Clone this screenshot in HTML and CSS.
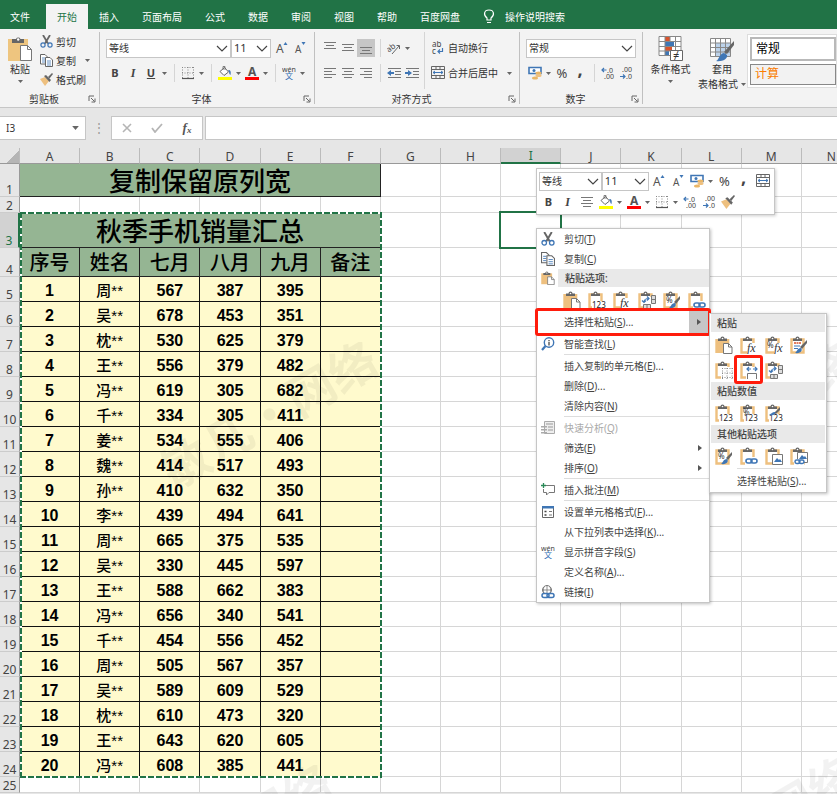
FILE: index.html
```
<!DOCTYPE html>
<html lang="zh-CN">
<head>
  <meta charset="UTF-8" />
  <meta name="viewport" content="width=device-width, initial-scale=1">
  <title>复制保留原列宽</title>
  <link rel="stylesheet" href="styles.css">
</head>
<body>
  <svg class="sprite" aria-hidden="true">
    <symbol id="i-chev" viewBox="0 0 12 7"><path d="M1 1l5 5 5-5" fill="none" stroke="#444" stroke-width="1.2"/></symbol>
    <symbol id="i-caret" viewBox="0 0 5 3"><path d="M0 0h5L2.5 3z" fill="#666"/></symbol>
    <symbol id="i-launch" viewBox="0 0 8 8"><path d="M1 6V1h5M3 3l3.500 3.500M7 3.500V7H3.500" fill="none" stroke="#666"/></symbol>
    <symbol id="i-paste-big" viewBox="0 0 24 26">
      <path d="M0 3h20v22H0z" fill="#eec57f"/><path d="M4 7V3h4a2.500 2.500 0 0 1 4.500 0H16v4z" fill="#666"/><circle cx="10.200" cy="3.500" r="1.200" fill="#fff"/>
      <path d="M12.500 9.500h7l4 4v11h-11z" fill="#fff" stroke="#777"/><path d="M19.500 9.500v4h4" fill="none" stroke="#777"/>
    </symbol>
    <symbol id="i-cut" viewBox="0 0 13 13">
      <path d="M3 0l5 8.500M10 0L5 8.500" stroke="#666" stroke-width="1.800" fill="none"/>
      <circle cx="3" cy="10" r="2.100" fill="none" stroke="#3f76b5" stroke-width="1.200"/><circle cx="10" cy="10" r="2.100" fill="none" stroke="#3f76b5" stroke-width="1.200"/>
    </symbol>
    <symbol id="i-copy" viewBox="0 0 13 13">
      <path d="M.5.5H5L7.500 3v7h-7z" fill="#fff" stroke="#666"/><path d="M2 4h3M2 6h3M2 8h3" stroke="#3f76b5" stroke-width=".8"/>
      <path d="M5.500 3.500H10L12.500 6v6.500h-7z" fill="#fff" stroke="#666"/><path d="M7 7h4M7 9h4M7 11h4" stroke="#3f76b5" stroke-width=".8"/>
    </symbol>
    <symbol id="i-brush" viewBox="0 0 13 13">
      <path d="M0 6l5-2 4 4-4 5z" fill="#eec07f"/><path d="M4 3l2-1 5 5-1.500 2z" fill="#666"/><path d="M8 4l4-4 1 1-3.500 4.500z" fill="#666"/>
    </symbol>
    <symbol id="i-grow" viewBox="0 0 14 14"><text x="1" y="12" class="g-a">A</text><path d="M8.500 4h4L10.500 1z" fill="#3f76b5"/></symbol>
    <symbol id="i-shrink" viewBox="0 0 14 14"><text x="2" y="12" class="g-a small">A</text><path d="M8.500 1h4L10.500 4z" fill="#3f76b5"/></symbol>
    <symbol id="i-border" viewBox="0 0 14 14"><path d="M1.500 1v11M7 1v11M12.500 1v11M1 1.500h12M1 7h12" stroke="#888" stroke-dasharray="1 1.500" fill="none"/><path d="M1 12.500h12" stroke="#555" stroke-width="1.200"/></symbol>
    <symbol id="i-fill" viewBox="0 0 14 14">
      <path d="M2 5.500L6.500 1.500 10.500 6 6 9.500z" fill="#fff" stroke="#666"/><path d="M5 4V.5h2V4" fill="none" stroke="#666" stroke-width=".8"/><path d="M10 4c3 0 3 2 2.500 5-1-.5-1.500-2-1.500-3.500z" fill="#3f76b5"/>
      <path d="M0 11h14v3H0z" fill="#ff0"/>
    </symbol>
    <symbol id="i-color" viewBox="0 0 14 14"><text x="3" y="10" class="g-a bold">A</text><path d="M0 11h14v3H0z" fill="#f00"/></symbol>
    <symbol id="i-wen" viewBox="0 0 14 14"><text x="0" y="6" class="g-wen">wén</text><text x="3" y="13" class="g-zh">文</text></symbol>
    <symbol id="i-top" viewBox="0 0 14 14"><path d="M1 1.500h12M3 4.500h8M1 7.500h12" stroke="#777"/></symbol>
    <symbol id="i-mid" viewBox="0 0 14 14"><path d="M1 3.500h12M3 6.500h8M1 9.500h12" stroke="#777"/></symbol>
    <symbol id="i-bot" viewBox="0 0 14 14"><path d="M1 6.500h12M3 9.500h8M1 12.500h12" stroke="#777"/></symbol>
    <symbol id="i-left" viewBox="0 0 14 14"><path d="M1 2.500h12M1 5.500h8M1 8.500h12M1 11.500h8" stroke="#777"/></symbol>
    <symbol id="i-center" viewBox="0 0 14 14"><path d="M1 2.500h12M3 5.500h8M1 8.500h12M3 11.500h8" stroke="#777"/></symbol>
    <symbol id="i-right" viewBox="0 0 14 14"><path d="M1 2.500h12M5 5.500h8M1 8.500h12M5 11.500h8" stroke="#777"/></symbol>
    <symbol id="i-orient" viewBox="0 0 14 14"><text x="0" y="9" class="g-ab" transform="rotate(-38 5 8)">ab</text><path d="M5 13l7-8M9.500 4.500H12.500V8" fill="none" stroke="#666"/></symbol>
    <symbol id="i-outdent" viewBox="0 0 14 14"><path d="M1 2.500h13M8 5.500h6M8 8.500h6M1 11.500h13" stroke="#777"/><path d="M0 7l4-3v2h3v2H4v2z" fill="#3f76b5"/></symbol>
    <symbol id="i-indent" viewBox="0 0 14 14"><path d="M1 2.500h13M8 5.500h6M8 8.500h6M1 11.500h13" stroke="#777"/><path d="M7 7L3 4v2H0v2h3v2z" fill="#3f76b5"/></symbol>
    <symbol id="i-wrap" viewBox="0 0 14 14"><text x="1" y="6" class="g-ab">ab</text><text x="1" y="13" class="g-ab">c</text><path d="M11.500 7v3.500H7M9 8.500l-2 2 2 2" fill="none" stroke="#3f76b5" stroke-width="1.200"/></symbol>
    <symbol id="i-merge" viewBox="0 0 14 14"><path d="M.5.500h13v12H.5zM.5 3.500h13M.5 9.500h13M5 .5v3M9 .5v3M5 9.500v3M9 9.500v3" fill="none" stroke="#666"/><path d="M2 6.500h10M4 5L2 6.500 4 8M10 5l2 1.500L10 8" fill="none" stroke="#3f76b5"/></symbol>
    <symbol id="i-money" viewBox="0 0 14 14"><path d="M1 1.500h12v6H1z" fill="#fff" stroke="#3f76b5" stroke-width="1.600"/><circle cx="6" cy="4.500" r="1.500" fill="#3f76b5"/><ellipse cx="10.500" cy="7" rx="3" ry="1.500" fill="#eab667"/><ellipse cx="10.500" cy="9.500" rx="3" ry="1.500" fill="#eec07f"/><ellipse cx="7" cy="12" rx="3" ry="1.600" fill="#eab667"/></symbol>
    <symbol id="i-dec" viewBox="0 0 14 14"><text x="6" y="7" class="g-dec">.0</text><text x="3" y="13" class="g-dec">.00</text><path d="M5.500 4H1M3 2L1 4l2 2" fill="none" stroke="#3f76b5" stroke-width="1.200"/></symbol>
    <symbol id="i-inc" viewBox="0 0 14 14"><text x="3" y="6" class="g-dec">.00</text><text x="7" y="13" class="g-dec">.0</text><path d="M1 10.500h5M4 8.500l2 2-2 2" fill="none" stroke="#3f76b5" stroke-width="1.200"/></symbol>
    <symbol id="i-cond" viewBox="0 0 26 26">
      <path d="M1 .5h22v19H1z" fill="#fff"/><path d="M7 .5h5v5H7zM7 10h7v5H7z" fill="#d9532c"/><path d="M7 5.500h9V10H7zM7 15h4v5H7z" fill="#3f76b5"/>
      <path d="M1 .5h22v19H1zM1 5.500h22M1 10.500h22M1 15h22M7 .5v19M12 .5v5M17.500 .5v19" fill="none" stroke="#888"/><path d="M12.500 14.500h12v10h-12z" fill="#fff" stroke="#666"/><text x="15" y="23" class="g-ne">≠</text>
    </symbol>
    <symbol id="i-table" viewBox="0 0 26 26">
      <path d="M1.500 2.500h20v18h-20z" fill="#fff"/><path d="M6.500 7h15v13.500h-15z" fill="#bcd2ea"/><path d="M1.500 2.500h20v18h-20zM1.500 7h20M1.500 11.500h20M1.500 16h20M6.500 2.500v18M11.500 2.500v18M16.500 2.500v18" fill="none" stroke="#888"/>
      <path d="M25 5v4l-7 9-3-2z" fill="#666"/><path d="M7 25c3-1 3-7 8-8l3 2c1 4-5 7-11 6z" fill="#3f76b5"/>
    </symbol>
    <symbol id="i-bulb" viewBox="0 0 12 15"><path d="M4 11V9C0 6 1 1 6 1s6 5 2 8v2zM4 13.500h4" fill="none" stroke="#fff" stroke-width="1.200"/></symbol>
    <symbol id="i-info" viewBox="0 0 14 14"><circle cx="8" cy="5.500" r="4.700" fill="#fff" stroke="#3f76b5" stroke-width="1.400"/><path d="M4.500 9L1 13" stroke="#3f76b5" stroke-width="2.200"/><path d="M8 3v1.200M8 5v3.500" stroke="#555" stroke-width="1.400"/></symbol>
    <symbol id="i-quick" viewBox="0 0 14 14"><path d="M3.500.5h10v12h-10z" fill="#eee" stroke="#aaa"/><path d="M5 3h7M7 6h5M7 9h5" stroke="#999"/><path d="M0 5h6v1.500H0zM0 8h6v1.500H0zM0 11h6v1.500H0z" fill="#aaa"/></symbol>
    <symbol id="i-note" viewBox="0 0 14 14"><path d="M5 2.500h8.500v7H8L5.500 12V9.500H2.500V6" fill="none" stroke="#777"/><path d="M2.500 0v5M0 2.500h5" stroke="#2a8a57" stroke-width="1.300"/></symbol>
    <symbol id="i-cellfmt" viewBox="0 0 14 14"><path d="M1.500 1.500h11v11h-11z" fill="#fff" stroke="#666"/><path d="M1 1h12v2.500H1z" fill="#3f76b5"/><path d="M3.500 6.500h2M3.500 10h2" stroke="#444" stroke-width="1.500"/><path d="M8 6.500h3M8 10h3" stroke="#777"/></symbol>
    <symbol id="i-link" viewBox="0 0 14 14"><circle cx="6" cy="5" r="4.500" fill="#fff" stroke="#777"/><path d="M1.500 5h9M6 .5v9M3 2c-1 2-1 4 0 6M9 2c1 2 1 4 0 6" fill="none" stroke="#777" stroke-width=".8"/><rect x="1" y="8.500" width="7" height="4" rx="2" fill="#fff" stroke="#3f76b5" stroke-width="1.500"/><rect x="6" y="8.500" width="7" height="4" rx="2" fill="none" stroke="#3f76b5" stroke-width="1.500"/></symbol>

    <!-- clipboard family for the paste options -->
    <symbol id="c-base" viewBox="0 0 18 18"><path d="M1.500 3.500h12v13h-12z" fill="#fff" stroke="#eec07f" stroke-width="2.400"/><path d="M3 5V2.500h2.500a2 2 0 0 1 4 0H12V5z" fill="#666"/><circle cx="7.500" cy="2.500" r=".8" fill="#fff"/></symbol>
    <symbol id="p-all" viewBox="0 0 18 18"><path d="M.3 3h14v14H.3z" fill="#eec07f"/><path d="M3 5V2.500h2.500a2 2 0 0 1 4 0H12V5z" fill="#666"/><circle cx="7.500" cy="2.500" r=".8" fill="#fff"/><path d="M8.500 7.500h5l3.500 3.500v6.500H8.500z" fill="#fff" stroke="#777"/><path d="M13.500 7.500V11H17" fill="none" stroke="#777"/></symbol>
    <symbol id="p-123" viewBox="0 0 18 18"><use href="#c-base"/><path d="M4 10h14v8H4z" fill="#fff"/><text x="4" y="17" class="g-123">123</text></symbol>
    <symbol id="p-fx" viewBox="0 0 18 18"><use href="#c-base"/><path d="M7 7h11v11H7z" fill="#fff"/><text x="7" y="16" class="g-fx">fx</text></symbol>
    <symbol id="p-pfx" viewBox="0 0 18 18"><use href="#c-base"/><path d="M9 7h9v11H9z" fill="#fff"/><text x="2" y="12" class="g-pct">%</text><text x="9" y="16" class="g-fx">fx</text></symbol>
    <symbol id="p-src" viewBox="0 0 18 18"><use href="#c-base"/><path d="M4 7h7" stroke="#d9532c" stroke-width="1.500" stroke-dasharray="2 .5"/><path d="M4 10h6M4 12.500h4" stroke="#3f76b5"/><path d="M17 4v3l-5 6-2-2z" fill="#666"/><path d="M5 17c2-1 2-5 6-5 2 2 0 6-6 5z" fill="#3f76b5"/></symbol>
    <symbol id="p-nob" viewBox="0 0 18 18"><use href="#c-base"/><path d="M6 6h12v12H6z" fill="#fff"/><path d="M7 7.500h11M7 12h11M7 16.500h11M7.500 7v11M12 7v11M17 7v11" stroke="#888" stroke-dasharray="1 1.500"/></symbol>
    <symbol id="p-width" viewBox="0 0 18 18"><use href="#c-base"/><path d="M6 6h12v12H6z" fill="#fff"/><path d="M7 8h4M13 8h4M9 6L7 8l2 2M15 6l2 2-2 2" fill="none" stroke="#3f76b5" stroke-width="1.200"/><path d="M7.500 18v-5.500h9V18" fill="none" stroke="#777"/></symbol>
    <symbol id="p-trans" viewBox="0 0 18 18"><use href="#c-base"/><path d="M5 6h13v12H5z" fill="#fff"/><path d="M13.500 4.500h4v8h-4zM13.500 8.500h4M5.500 13.500h7v4h-7zM9 13.500v4" fill="#ddd" stroke="#777"/><path d="M6 11.500c0-3 1-4 5-4M9 5.500l2 2-2 2M4 9.500l2 2 2-2" fill="none" stroke="#3f76b5" stroke-width="1.200"/></symbol>
    <symbol id="p-fmt" viewBox="0 0 18 18"><use href="#c-base"/><text x="3" y="12" class="g-pct">%</text><path d="M17 5v3l-4 5-2-2z" fill="#666"/><path d="M6 17c2-1 2-5 6-5 2 2 0 6-6 5z" fill="#3f76b5"/></symbol>
    <symbol id="p-p123" viewBox="0 0 18 18"><use href="#p-123"/><text x="3" y="11" class="g-pct">%</text></symbol>
    <symbol id="p-b123" viewBox="0 0 18 18"><use href="#p-123"/><path d="M15 3v3l-4 4-2-1z" fill="#666"/><path d="M4 11c2-1 3-3 6-3 1 2-1 4-6 3z" fill="#3f76b5"/></symbol>
    <symbol id="p-link" viewBox="0 0 18 18"><use href="#c-base"/><path d="M5 10h13v8H5z" fill="#fff"/><rect x="6" y="12" width="6" height="4" rx="2" fill="none" stroke="#3f76b5" stroke-width="1.600"/><rect x="11" y="12" width="6" height="4" rx="2" fill="none" stroke="#3f76b5" stroke-width="1.600"/></symbol>
    <symbol id="p-pic" viewBox="0 0 18 18"><use href="#c-base"/><path d="M7.500 7.500h10v10h-10z" fill="#fff" stroke="#777"/><path d="M9 15l3-4 2 2 1-1 2 3z" fill="#3f76b5"/></symbol>
    <symbol id="p-lpic" viewBox="0 0 18 18"><use href="#c-base"/><path d="M7.500 5.500h10v10h-10z" fill="#fff" stroke="#777"/><path d="M9 12l3-4 2 2 1-1 2 3z" fill="#3f76b5"/><path d="M4 12h10v6H4z" fill="#fff"/><rect x="5" y="13" width="5" height="3.500" rx="1.700" fill="none" stroke="#3f76b5" stroke-width="1.500"/><rect x="9" y="13" width="5" height="3.500" rx="1.700" fill="none" stroke="#3f76b5" stroke-width="1.500"/></symbol>
  </svg>

  <nav class="tabs">
    <button class="tab file">文件</button>
    <button class="tab active">开始</button>
    <button class="tab">插入</button>
    <button class="tab">页面布局</button>
    <button class="tab">公式</button>
    <button class="tab">数据</button>
    <button class="tab">审阅</button>
    <button class="tab">视图</button>
    <button class="tab">帮助</button>
    <button class="tab">百度网盘</button>
    <button class="tab tell"><svg width="12" height="15"><use href="#i-bulb"/></svg>操作说明搜索</button>
  </nav>

  <div class="ribbon">
    <section class="group clip">
      <div class="group-body">
        <button class="big"><svg width="24" height="26"><use href="#i-paste-big"/></svg><span>粘贴</span><svg width="5" height="3"><use href="#i-caret"/></svg></button>
        <div class="stack">
          <button class="txt"><svg width="13" height="13"><use href="#i-cut"/></svg>剪切</button>
          <button class="txt"><svg width="13" height="13"><use href="#i-copy"/></svg>复制<svg class="more" width="5" height="3"><use href="#i-caret"/></svg></button>
          <button class="txt"><svg width="13" height="13"><use href="#i-brush"/></svg>格式刷</button>
        </div>
      </div>
      <div class="group-name"><span>剪贴板</span><svg width="8" height="8"><use href="#i-launch"/></svg></div>
    </section>

    <section class="group font">
      <div class="group-body rows">
        <div class="row">
          <span class="combo family"><select aria-label="字体"><option>等线</option></select><svg width="12" height="7"><use href="#i-chev"/></svg></span>
          <span class="combo size"><select aria-label="字号"><option>11</option></select><svg width="12" height="7"><use href="#i-chev"/></svg></span>
          <button class="ib"><svg width="14" height="14"><use href="#i-grow"/></svg></button>
          <button class="ib"><svg width="14" height="14"><use href="#i-shrink"/></svg></button>
        </div>
        <div class="row">
          <button class="ib"><b>B</b></button>
          <button class="ib"><i>I</i></button>
          <button class="ib"><u>U</u></button>
          <button class="cb"><svg width="5" height="3"><use href="#i-caret"/></svg></button>
          <span class="sep"></span>
          <button class="ib"><svg width="14" height="14"><use href="#i-border"/></svg></button>
          <button class="cb"><svg width="5" height="3"><use href="#i-caret"/></svg></button>
          <span class="sep"></span>
          <button class="ib"><svg width="14" height="14"><use href="#i-fill"/></svg></button>
          <button class="cb"><svg width="5" height="3"><use href="#i-caret"/></svg></button>
          <button class="ib"><svg width="14" height="14"><use href="#i-color"/></svg></button>
          <button class="cb"><svg width="5" height="3"><use href="#i-caret"/></svg></button>
          <span class="sep"></span>
          <button class="ib"><svg width="14" height="14"><use href="#i-wen"/></svg></button>
          <button class="cb"><svg width="5" height="3"><use href="#i-caret"/></svg></button>
        </div>
      </div>
      <div class="group-name"><span>字体</span><svg width="8" height="8"><use href="#i-launch"/></svg></div>
    </section>

    <section class="group align">
      <div class="group-body">
        <div class="rows">
          <div class="row">
            <button class="ib"><svg width="14" height="14"><use href="#i-top"/></svg></button>
            <button class="ib"><svg width="14" height="14"><use href="#i-mid"/></svg></button>
            <button class="ib on"><svg width="14" height="14"><use href="#i-bot"/></svg></button>
            <span class="sep"></span>
            <button class="ib"><svg width="14" height="14"><use href="#i-orient"/></svg></button>
            <button class="cb"><svg width="5" height="3"><use href="#i-caret"/></svg></button>
          </div>
          <div class="row">
            <button class="ib"><svg width="14" height="14"><use href="#i-left"/></svg></button>
            <button class="ib"><svg width="14" height="14"><use href="#i-center"/></svg></button>
            <button class="ib"><svg width="14" height="14"><use href="#i-right"/></svg></button>
            <span class="sep"></span>
            <button class="ib"><svg width="14" height="14"><use href="#i-outdent"/></svg></button>
            <button class="ib"><svg width="14" height="14"><use href="#i-indent"/></svg></button>
          </div>
        </div>
        <div class="rows wraps">
          <div class="row"><button class="txt"><svg width="14" height="14"><use href="#i-wrap"/></svg>自动换行</button></div>
          <div class="row"><button class="txt"><svg width="14" height="14"><use href="#i-merge"/></svg>合并后居中<svg class="more" width="5" height="3"><use href="#i-caret"/></svg></button></div>
        </div>
      </div>
      <div class="group-name"><span>对齐方式</span><svg width="8" height="8"><use href="#i-launch"/></svg></div>
    </section>

    <section class="group number">
      <div class="group-body rows">
        <div class="row"><span class="combo format"><select aria-label="数字格式"><option>常规</option></select><svg width="12" height="7"><use href="#i-chev"/></svg></span></div>
        <div class="row">
          <button class="ib"><svg width="14" height="14"><use href="#i-money"/></svg></button>
          <button class="cb"><svg width="5" height="3"><use href="#i-caret"/></svg></button>
          <button class="ib pct">%</button>
          <button class="ib comma">,</button>
          <span class="sep"></span>
          <button class="ib"><svg width="14" height="14"><use href="#i-dec"/></svg></button>
          <button class="ib"><svg width="14" height="14"><use href="#i-inc"/></svg></button>
        </div>
      </div>
      <div class="group-name"><span>数字</span><svg width="8" height="8"><use href="#i-launch"/></svg></div>
    </section>

    <section class="group styles">
      <button class="big cond"><svg width="26" height="26"><use href="#i-cond"/></svg><span>条件格式</span><svg width="5" height="3"><use href="#i-caret"/></svg></button>
      <button class="big"><svg width="26" height="26"><use href="#i-table"/></svg><span>套用</span><span class="last">表格格式<svg width="5" height="3"><use href="#i-caret"/></svg></span></button>
      <div class="gallery">
        <button class="cellstyle picked">常规</button>
        <button class="cellstyle calc">计算</button>
      </div>
    </section>
  </div>

  <div class="formula">
    <div class="namebox"><input type="text" value="I3" aria-label="名称框"><svg width="7" height="4"><use href="#i-caret"/></svg></div>
    <span class="dots">⋮</span>
    <div class="fxbtns">
      <button aria-label="取消"><svg width="10" height="10" viewBox="0 0 10 10"><path d="M1 1l8 8M9 1L1 9" stroke="#b5b5b5" stroke-width="1.600"/></svg></button>
      <button aria-label="输入"><svg width="12" height="10" viewBox="0 0 12 10"><path d="M1 5l3 4 7-8" fill="none" stroke="#b5b5b5" stroke-width="1.800"/></svg></button>
      <button class="fx" aria-label="插入函数">f<small>x</small></button>
    </div>
    <input class="fxinput" type="text" aria-label="编辑栏">
  </div>

  <main class="sheet">
    <table class="grid" id="grid"></table>
    <div class="ants"></div>
    <div class="mark m1">敏凡·网络</div>
    <div class="mark m2">敏凡·网络</div>
    <div class="mark m3">敏凡·网络</div>
    <div class="mark m4">敏凡·网络</div>

    <div class="mini">
      <div class="row">
        <span class="combo mfam"><select aria-label="字体"><option>等线</option></select><svg width="12" height="7"><use href="#i-chev"/></svg></span>
        <span class="combo msize"><select aria-label="字号"><option>11</option></select><svg width="12" height="7"><use href="#i-chev"/></svg></span>
        <button class="ib"><svg width="14" height="14"><use href="#i-grow"/></svg></button>
        <button class="ib"><svg width="14" height="14"><use href="#i-shrink"/></svg></button>
        <button class="ib"><svg width="14" height="14"><use href="#i-money"/></svg></button>
        <button class="cb"><svg width="5" height="3"><use href="#i-caret"/></svg></button>
        <button class="ib pct">%</button>
        <button class="ib comma">,</button>
        <button class="ib"><svg width="14" height="14"><use href="#i-merge"/></svg></button>
      </div>
      <div class="row">
        <button class="ib"><b>B</b></button>
        <button class="ib"><i>I</i></button>
        <button class="ib"><svg width="14" height="14"><use href="#i-center"/></svg></button>
        <button class="ib"><svg width="14" height="14"><use href="#i-fill"/></svg></button>
        <button class="cb"><svg width="5" height="3"><use href="#i-caret"/></svg></button>
        <button class="ib"><svg width="14" height="14"><use href="#i-color"/></svg></button>
        <button class="cb"><svg width="5" height="3"><use href="#i-caret"/></svg></button>
        <button class="ib"><svg width="14" height="14"><use href="#i-border"/></svg></button>
        <button class="cb"><svg width="5" height="3"><use href="#i-caret"/></svg></button>
        <button class="ib"><svg width="14" height="14"><use href="#i-dec"/></svg></button>
        <button class="ib"><svg width="14" height="14"><use href="#i-inc"/></svg></button>
        <button class="ib"><svg width="14" height="14"><use href="#i-brush"/></svg></button>
      </div>
    </div>

    <div class="menu">
      <button class="item"><svg width="14" height="14"><use href="#i-cut"/></svg><span>剪切(<u>T</u>)</span></button>
      <button class="item"><svg width="14" height="14"><use href="#i-copy"/></svg><span>复制(<u>C</u>)</span></button>
      <div class="item head"><svg width="14" height="14"><use href="#p-all"/></svg><span>粘贴选项:</span></div>
      <div class="opts">
        <button aria-label="粘贴"><svg width="18" height="18"><use href="#p-all"/></svg></button>
        <button aria-label="值"><svg width="18" height="18"><use href="#p-123"/></svg></button>
        <button aria-label="公式"><svg width="18" height="18"><use href="#p-fx"/></svg></button>
        <button aria-label="转置"><svg width="18" height="18"><use href="#p-trans"/></svg></button>
        <button aria-label="格式"><svg width="18" height="18"><use href="#p-fmt"/></svg></button>
        <button aria-label="粘贴链接"><svg width="18" height="18"><use href="#p-link"/></svg></button>
      </div>
      <button class="item special"><span>选择性粘贴(<u>S</u>)...</span><em class="arrow"></em></button>
      <button class="item"><svg width="14" height="14"><use href="#i-info"/></svg><span>智能查找(<u>L</u>)</span></button>
      <hr>
      <button class="item"><span>插入复制的单元格(<u>E</u>)...</span></button>
      <button class="item"><span>删除(<u>D</u>)...</span></button>
      <button class="item"><span>清除内容(<u>N</u>)</span></button>
      <hr>
      <button class="item off" disabled><svg width="14" height="14"><use href="#i-quick"/></svg><span>快速分析(<u>Q</u>)</span></button>
      <button class="item"><span>筛选(<u>E</u>)</span><em class="arrow"></em></button>
      <button class="item"><span>排序(<u>O</u>)</span><em class="arrow"></em></button>
      <hr>
      <button class="item"><svg width="14" height="14"><use href="#i-note"/></svg><span>插入批注(<u>M</u>)</span></button>
      <hr>
      <button class="item"><svg width="14" height="14"><use href="#i-cellfmt"/></svg><span>设置单元格格式(<u>F</u>)...</span></button>
      <button class="item"><span>从下拉列表中选择(<u>K</u>)...</span></button>
      <button class="item"><svg width="14" height="14"><use href="#i-wen"/></svg><span>显示拼音字段(<u>S</u>)</span></button>
      <button class="item"><span>定义名称(<u>A</u>)...</span></button>
      <button class="item"><svg width="14" height="14"><use href="#i-link"/></svg><span>链接(<u>I</u>)</span></button>
    </div>

    <div class="menu sub">
      <h3>粘贴</h3>
      <div class="opts">
        <button aria-label="粘贴"><svg width="18" height="18"><use href="#p-all"/></svg></button>
        <button aria-label="公式"><svg width="18" height="18"><use href="#p-fx"/></svg></button>
        <button aria-label="公式和数字格式"><svg width="18" height="18"><use href="#p-pfx"/></svg></button>
        <button aria-label="保留源格式"><svg width="18" height="18"><use href="#p-src"/></svg></button>
        <button aria-label="无边框"><svg width="18" height="18"><use href="#p-nob"/></svg></button>
        <button class="boxed" aria-label="保留源列宽"><svg width="18" height="18"><use href="#p-width"/></svg></button>
        <button aria-label="转置"><svg width="18" height="18"><use href="#p-trans"/></svg></button>
      </div>
      <h3>粘贴数值</h3>
      <div class="opts">
        <button aria-label="值"><svg width="18" height="18"><use href="#p-123"/></svg></button>
        <button aria-label="值和数字格式"><svg width="18" height="18"><use href="#p-p123"/></svg></button>
        <button aria-label="值和源格式"><svg width="18" height="18"><use href="#p-b123"/></svg></button>
      </div>
      <h3>其他粘贴选项</h3>
      <div class="opts">
        <button aria-label="格式"><svg width="18" height="18"><use href="#p-fmt"/></svg></button>
        <button aria-label="粘贴链接"><svg width="18" height="18"><use href="#p-link"/></svg></button>
        <button aria-label="图片"><svg width="18" height="18"><use href="#p-pic"/></svg></button>
        <button aria-label="链接的图片"><svg width="18" height="18"><use href="#p-lpic"/></svg></button>
      </div>
      <hr>
      <button class="item"><span>选择性粘贴(<u>S</u>)...</span></button>
    </div>
  </main>
  <script src="script.js"></script>
</body>
</html>
```

FILE: styles.css
```
:root {
  --green: #217346;
  --bar: #e6e6e6;
  --ribbon: #f3f3f3;
  --line: #c6c6c6;
  --gridline: #d6d6d6;
  --text: #333;
  --red: #ff1c0c;
}
* { box-sizing: border-box; }
body {
  margin: 0;
  height: 100vh;
  overflow: hidden;
  display: flex;
  flex-direction: column;
  background: var(--bar);
  color: var(--text);
  font: 10px/14px "Noto Sans", "Noto Sans CJK SC", sans-serif;
}
button, input, select { font: inherit; color: inherit; padding: 0; margin: 0; border: none; background: none; }
button { white-space: nowrap; }
svg { display: block; flex: none; }
.sprite { display: none; }

/* glyphs inside icons */
.g-a { font: 12px "Noto Sans", sans-serif; fill: #555; }
.g-a.small { font-size: 10px; }
.g-a.bold { font-weight: 700; }
.g-wen { font: 7px "Noto Sans", sans-serif; fill: #444; }
.g-zh { font: 8px "Noto Sans CJK SC", sans-serif; fill: #2e6db4; }
.g-ab { font: 8px "Noto Sans", sans-serif; fill: #444; }
.g-dec { font: 7px "Noto Sans", sans-serif; fill: #444; }
.g-ne { font: 11px "Noto Sans", sans-serif; fill: #333; }
.g-123 { font: 8px "Noto Sans", sans-serif; fill: #222; }
.g-fx { font: italic 12px "Liberation Serif", serif; fill: #333; }
.g-pct { font: 8px "Noto Sans", sans-serif; fill: #333; }

/* tabs */
.tabs { display: flex; align-items: flex-end; gap: 1px; height: 29px; background: var(--green); color: #fff; flex: none; }
.tab { height: 25px; padding: 0 11px; }
.tab.file { padding: 0 15px 0 10px; }
.tab.active { background: var(--ribbon); color: var(--green); }
.tab:nth-child(n+3) { padding: 0 11px 0 10px; margin-right: 1px; }
.tab.tell { display: flex; align-items: center; gap: 10px; }

/* ribbon */
.ribbon { display: flex; height: 79px; flex: none; background: var(--ribbon); border-bottom: 1px solid var(--line); padding: 3px 0; }
.group { display: flex; flex-direction: column; flex: none; border-right: 1px solid #c0c0c0; }
.group-body { display: flex; flex: 1; }
.group.clip { width: 100px; }
.group.font { width: 215px; }
.group.align { width: 205px; }
.group.number { width: 123px; }
.group.styles { flex: 1; flex-direction: row; border: none; overflow: hidden; }
.group-name { display: flex; align-items: center; height: 14px; margin-bottom: -2px; padding-right: 3px; }
.group-name span { flex: 1; text-align: center; }
.big { display: flex; flex-direction: column; align-items: center; padding-top: 4px; }
.big span { margin-bottom: 4px; }
.big .last { display: flex; align-items: center; gap: 3px; margin: -3px 0 0; }
.clip .big { width: 40px; }
.cond { width: 55px; }
.styles .big + .big { width: 48px; }
.stack { display: flex; flex-direction: column; }
.txt { display: flex; align-items: center; gap: 3px; height: 19px; }
.txt .more { margin-left: 6px; }
.rows { display: flex; flex-direction: column; gap: 7px; padding: 7px 0 0 6px; }
.row { display: flex; align-items: center; height: 18px; }
.ib { display: flex; align-items: center; justify-content: center; width: 18px; height: 18px; font-size: 11px; color: #444; flex: none; }
.ib.on { background: #c6c6c6; }
.ib i { font-family: "Liberation Serif", serif; font-weight: 700; font-size: 12px; }
.ib u { font-weight: 700; }
.ib.pct { font-size: 13px; }
.ib.comma { font-size: 18px; font-weight: 700; padding-bottom: 8px; }
.cb { display: flex; justify-content: center; width: 9px; flex: none; }
.sep { width: 1px; height: 18px; margin: 0 4px 0 5px; background: #d5d5d5; }
.combo { display: flex; align-items: center; position: relative; height: 19px; background: #fff; border: 1px solid var(--line); }
.combo select { appearance: none; width: 100%; height: 17px; padding-left: 2px; outline: none; }
.combo svg { position: absolute; right: 2px; pointer-events: none; }
.family { width: 125px; }
.size { width: 40px; margin-right: 2px; }
.size select, .msize select { font-size: 11px; }
.format { width: 110px; }
.wraps { margin-left: 3px; border-left: 1px solid #d5d5d5; height: 57px; }
.wraps .row { flex: none; }
.gallery { flex: 1; min-width: 86px; margin: 2px 0 16px 1px; padding: 2px 0 2px 2px; border: 1px solid #ddd; background: #fff; display: flex; flex-direction: column; gap: 3px; }
.cellstyle { flex: 1; text-align: left; padding-left: 4px; font-size: 12px; border: 1px solid #888; }
.cellstyle.picked { border: 2px solid #b9b9b9; color: #000; }
.cellstyle.calc { background: #f2f2f2; color: #fa7d00; }

/* formula bar */
.formula { display: flex; height: 40px; flex: none; padding: 8px 0; }
.namebox { display: flex; align-items: center; width: 86px; padding: 0 6px; background: #fff; border: 1px solid var(--line); border-left: none; }
.namebox input { flex: 1; width: 50px; outline: none; }
.dots { width: 25px; text-align: center; font-size: 12px; line-height: 24px; color: #999; }
.fxbtns { display: flex; width: 92px; margin-right: 2px; background: #fff; border: 1px solid var(--line); }
.fxbtns button { flex: 1; display: flex; align-items: center; justify-content: center; }
.fxbtns .fx { font: italic bold 13px "Liberation Serif", serif; color: #555; }
.fx small { font-size: 9px; padding-top: 3px; }
.fxinput { flex: 1; background: #fff; border: 1px solid var(--line); border-right: none; outline: none; }

/* sheet */
.sheet { position: relative; flex: 1; overflow: hidden; }
.grid { table-layout: fixed; border-collapse: separate; border-spacing: 0; width: 862px; background: #fff; }
.grid col.nums { width: 20px; }
.grid th, .grid td { padding: 0; border: solid var(--gridline); border-width: 0 1px 1px 0; height: 25px; overflow: hidden; white-space: nowrap; text-align: center; }
.grid th { background: var(--bar); font-weight: 400; font-size: 12px; line-height: 13px; color: #444; border-color: #bbb; vertical-align: bottom; }
.grid thead th { height: 16px; border-bottom-color: #999; }
.grid thead th:first-child { background: linear-gradient(135deg, var(--bar) 62%, #b5b5b5 62%); }
.grid tbody th { border-right-color: #999; border-bottom-color: #ccc; }
.grid .h33 > * { height: 33px; }
.grid .h16 > * { height: 16px; }
.grid .h35 > * { height: 35px; }
.grid .h29 > * { height: 29px; }
.grid th.sel { background: #d2d2d2; color: var(--green); }
.grid thead th.sel { border-bottom: 2px solid var(--green); line-height: 12px; }
.grid tbody th.sel { border-right: 2px solid var(--green); }
.grid td.title, .grid td.label { background: #95b593; border-color: #222; color: #000; font-weight: 500; font-family: "Noto Sans CJK SC", sans-serif; }
.grid td.title { font-size: 26px; line-height: 30px; }
.grid td.label { font-size: 20px; line-height: 26px; }
.grid td.val { background: #fffacd; border-color: #111; color: #000; padding-top: 3px; font: bold 16px/20px "Liberation Sans", "Noto Sans CJK SC", sans-serif; }
.grid td.name { font-size: 15px; font-weight: 500; }
.grid td.cursor { position: relative; overflow: visible; }
.grid td.cursor::after { content: ""; position: absolute; inset: -2px; border: 2px solid var(--green); }
.ants {
  position: absolute; left: 20px; top: 64px; width: 362px; height: 566px;
  --h: repeating-linear-gradient(90deg, var(--green) 0 6px, #fff 6px 8px);
  --v: repeating-linear-gradient(180deg, var(--green) 0 6px, #fff 6px 8px);
  background: var(--h) top / 100% 2px no-repeat, var(--h) bottom / 100% 2px no-repeat, var(--v) left / 2px 100% no-repeat, var(--v) right / 2px 100% no-repeat;
}
.mark { position: absolute; font: bold 48px/60px "Noto Sans CJK SC", sans-serif; color: rgba(0, 0, 0, .05); transform: rotate(-30deg); white-space: nowrap; }
.m1 { left: 148px; top: 234px; }
.m2 { left: 103px; top: 657px; }
.m3 { left: 628px; top: 234px; }
.m4 { left: 628px; top: 649px; }

/* floating toolbar */
.mini { position: absolute; left: 536px; top: 20px; width: 239px; height: 47px; padding: 3px 2px; background: #fff; border: 1px solid var(--line); box-shadow: 1px 1px 3px rgba(0, 0, 0, .2); display: flex; flex-direction: column; gap: 3px; }
.mini .ib { width: 19px; }
.mfam { width: 64px; }
.msize { width: 48px; }

/* context menus */
.menu { position: absolute; left: 536px; top: 80px; width: 174px; background: #fff; border: 1px solid var(--line); box-shadow: 1px 1px 3px rgba(0, 0, 0, .25); color: #444; }
.item { position: relative; display: flex; align-items: center; width: 100%; height: 20px; text-align: left; }
.item svg { position: absolute; left: 4px; }
.item span { flex: 1; padding-left: 27px; }
.item.head { height: 18px; font-weight: 500; }
.item.head span { margin-left: 21px; padding-left: 7px; background: #e9e9e9; line-height: 18px; }
.item.off { color: #aaa; }
.item.special { height: 22px; margin-bottom: 1px; background: #fff; }
.special .arrow { width: 20px; height: 22px; padding: 0 8px; background: #c6c6c6; }
.special::after { content: ""; position: absolute; inset: -3px -2px; border: 3px solid var(--red); border-radius: 3px; }
.arrow { display: flex; align-items: center; padding-right: 7px; }
.arrow::before { content: ""; border: solid transparent; border-width: 3px 0 3px 4px; border-left-color: #555; }
.menu hr { margin: 0 0 1px 27px; border: none; border-top: 1px solid #ddd; }
.menu .opts { display: flex; flex-wrap: wrap; height: 24px; padding-left: 22px; overflow: hidden; }
.menu .opts button { display: flex; justify-content: center; align-items: center; width: 25px; height: 25px; }

.sub { left: 709px; top: 165px; width: 118px; }
.sub h3 { margin: 0 1px; padding-left: 6px; height: 18px; background: #e9e9e9; font-size: 10px; line-height: 18px; font-weight: 500; }
.menu.sub .opts { height: auto; padding-left: 1px; overflow: visible; }
.boxed { position: relative; }
.boxed::after { content: ""; position: absolute; inset: -2px; border: 3px solid var(--red); border-radius: 3px; }
.sub .item { height: 22px; }
```

FILE: script.js
```
const cols = 'ABCDEFGHIJKLMN'.split('');
const names = ['周', '吴', '枕', '王', '冯', '千', '姜', '魏', '孙', '李', '周', '吴', '王', '冯', '千', '周', '吴', '枕', '王', '冯'];
const sales = [
  [567, 387, 395], [678, 453, 351], [530, 625, 379], [556, 379, 482], [619, 305, 682],
  [334, 305, 411], [534, 555, 406], [414, 517, 493], [410, 632, 350], [439, 494, 641],
  [665, 375, 535], [330, 445, 597], [588, 662, 383], [656, 340, 541], [454, 556, 452],
  [505, 567, 357], [589, 609, 529], [610, 473, 320], [643, 620, 605], [608, 385, 441]
];
const heights = { 1: 'h33', 2: 'h16', 3: 'h35', 4: 'h29', 25: 'h16' };

// A-F 列的内容
function leftCells(row) {
  if (row === 1) return '<td class="title" colspan="6">复制保留原列宽</td>';
  if (row === 3) return '<td class="title" colspan="6">秋季手机销量汇总</td>';
  if (row === 4) return ['序号', '姓名', '七月', '八月', '九月', '备注'].map(t => `<td class="label">${t}</td>`).join('');
  if (row >= 5 && row <= 24) {
    const i = row - 5;
    return `<td class="val">${i + 1}</td><td class="val name">${names[i]}**</td>` +
      sales[i].map(n => `<td class="val">${n}</td>`).join('') + '<td class="val"></td>';
  }
  return '<td></td>'.repeat(6);
}

let html = '<colgroup><col class="nums">' + '<col>'.repeat(cols.length) + '</colgroup><thead><tr><th></th>';
html += cols.map(c => `<th class="${c === 'I' ? 'sel' : ''}">${c}</th>`).join('') + '</tr></thead><tbody>';
for (let row = 1; row <= 25; row++) {
  html += `<tr class="${heights[row] || ''}"><th class="${row === 3 ? 'sel' : ''}">${row}</th>` + leftCells(row);
  html += cols.slice(6).map(c => `<td class="${row === 3 && c === 'I' ? 'cursor' : ''}"></td>`).join('') + '</tr>';
}
document.getElementById('grid').innerHTML = html + '</tbody>';
```
